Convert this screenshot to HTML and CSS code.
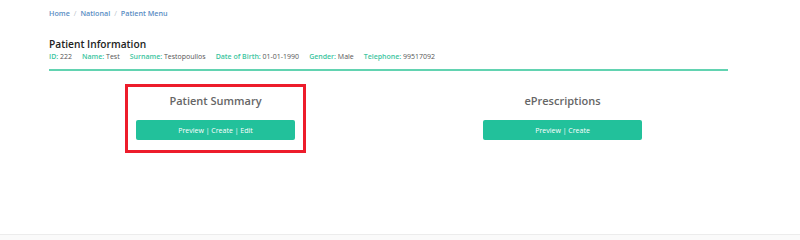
FILE: index.html
```html
<!DOCTYPE html>
<html>
<head>
<meta charset="utf-8">
<link rel="stylesheet" href="styles.css">
</head>
<body>
<div class="page">
  <nav class="crumbs">
    <a>Home</a><span class="sep">/</span><a>National</a><span class="sep">/</span><a>Patient Menu</a>
  </nav>
  <section class="info">
    <h1>Patient Information</h1>
    <div class="fields">
      <span class="f"><b>ID:</b> 222</span>
      <span class="f"><b>Name:</b> Test</span>
      <span class="f"><b>Surname:</b> Testopoullos</span>
      <span class="f"><b>Date of Birth:</b> 01-01-1990</span>
      <span class="f"><b>Gender:</b> Male</span>
      <span class="f"><b>Telephone:</b> 99517092</span>
    </div>
  </section>
  <div class="cards">
    <div class="col">
      <div class="card selected">
        <h2>Patient Summary</h2>
        <button class="btn">Preview | Create | Edit</button>
      </div>
    </div>
    <div class="col">
      <div class="card">
        <h2>ePrescriptions</h2>
        <button class="btn">Preview | Create</button>
      </div>
    </div>
  </div>
</div>
<footer class="foot"></footer>
</body>
</html>
```
FILE: styles.css
```css
html, body { margin: 0; padding: 0; background: #fff; }
body { font-family: "Open Sans", "Noto Sans", sans-serif; width: 800px; height: 240px; overflow: hidden; position: relative; }
.page { height: 234px; }
.crumbs { padding: 7px 0 0 49px; font-size: 7.2px; font-weight: 600; color: #5b8ec4; line-height: 12px; }
.crumbs .sep { color: #b9c3cc; margin: 0 4px; font-weight: 400; }
.info { margin: 18px 0 0 49px; width: 679px; border-bottom: 2px solid #62d3b1; padding-bottom: 6px; }
.info h1 { margin: 0; font-size: 10.2px; font-weight: 600; color: #222; line-height: 14px; }
.fields { display: flex; gap: 10px; font-size: 7px; color: #555; line-height: 12px; margin-top: 0; }
.fields b { color: #3cc5a0; font-weight: 600; }
.cards { display: flex; margin: 13px 0 0 45px; width: 694px; }
.col { flex: 1; display: flex; justify-content: center; }
.card { width: 159px; padding: 6px 8px 10px; border: 3px solid transparent; text-align: center; margin-left: -6px; }
.card.selected { border-color: #ed1c2b; }
.card h2 { margin: 0; font-size: 11px; font-weight: 600; color: #666; line-height: 15px; padding: 0 0 12px; }
.btn { display: block; width: 159px; height: 20px; border: 0; border-radius: 2px; background: #22c19b; color: #fff; font-family: inherit; font-size: 7px; font-weight: 500; padding: 0; }
.foot { height: 6px; border-top: 1px solid #ececec; background: #fafafa; }
```
